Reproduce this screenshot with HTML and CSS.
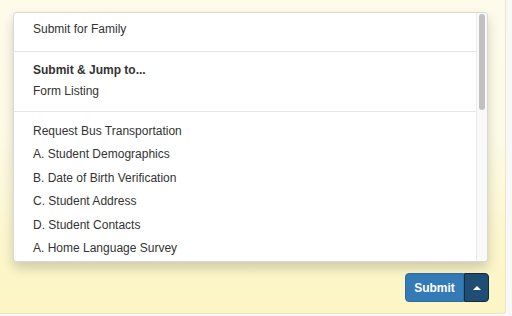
FILE: index.html
```html
<!DOCTYPE html>
<html>
<head>
<meta charset="utf-8">
<link rel="stylesheet" href="styles.css">
</head>
<body>
<div class="panel">
  <div class="panel-body"></div>
  <div class="panel-footer">
    <div class="btn-group">
      <button class="btn btn-main">Submit</button>
      <button class="btn btn-caret"><span class="caret"></span></button>
      <div class="dropdown-menu">
        <ul class="menu-list">
          <li class="item first">Submit for Family</li>
          <li class="divider"></li>
          <li class="item compact header">Submit &amp; Jump to...</li>
          <li class="item compact">Form Listing</li>
          <li class="divider"></li>
          <li class="item">Request Bus Transportation</li>
          <li class="item">A. Student Demographics</li>
          <li class="item">B. Date of Birth Verification</li>
          <li class="item">C. Student Address</li>
          <li class="item">D. Student Contacts</li>
          <li class="item">A. Home Language Survey</li>
        </ul>
        <div class="rail"><div class="thumb"></div></div>
      </div>
    </div>
  </div>
</div>
</body>
</html>
```
FILE: styles.css
```css
* { box-sizing: border-box; }
html, body {
  margin: 0;
  padding: 0;
  width: 512px;
  height: 316px;
  overflow: hidden;
  background: #f8f8f6;
  font-family: "Liberation Sans", Arial, Helvetica, sans-serif;
}
.panel {
  width: 506px;
  height: 314px;
  display: flex;
  flex-direction: column;
  background: linear-gradient(to bottom, #fefbeb 0%, #fdfae6 45%, #fcf6cb 78%, #fcf5c5 100%);
  border-right: 1px solid #ebe6c6;
  border-bottom: 1px solid #ebe6c6;
  border-radius: 0 0 4px 0;
}
.panel-body { flex: 1; }
.panel-footer {
  display: flex;
  justify-content: flex-end;
  padding: 0 16px 11px 0;
}
.btn-group {
  position: relative;
  display: flex;
}
.btn {
  height: 29px;
  margin: 0;
  border: 1px solid #2e6da4;
  color: #fff;
  font-family: "Liberation Sans", Arial, sans-serif;
  font-size: 12px;
  font-weight: bold;
  padding: 0;
}
.btn-main {
  width: 59px;
  background: #337ab7;
  border-radius: 4px 0 0 4px;
}
.btn-caret {
  width: 25px;
  background: #204d74;
  border-color: #122b40;
  border-radius: 0 4px 4px 0;
  display: flex;
  align-items: center;
  justify-content: center;
}
.caret {
  width: 0;
  height: 0;
  border-left: 4px solid transparent;
  border-right: 4px solid transparent;
  border-bottom: 4px solid #fff;
}
.dropdown-menu {
  position: absolute;
  right: 1px;
  bottom: 40px;
  width: 475px;
  height: 250px;
  display: flex;
  background: #fff;
  border: 1px solid rgba(0,0,0,.15);
  border-radius: 4px;
  box-shadow: 0 6px 12px rgba(0,0,0,.175);
  overflow: hidden;
}
.menu-list {
  flex: 1;
  list-style: none;
  margin: 0;
  padding: 5px 0 0;
  overflow: hidden;
}
.item {
  padding: 3px 19px;
  font-size: 12px;
  line-height: 17.5px;
  color: #333;
  white-space: nowrap;
}
.item.compact {
  padding: 2px 19px;
  line-height: 17px;
}
.header { font-weight: bold; }
.divider {
  height: 1px;
  margin: 9px 0 8px;
  background: #e5e5e5;
}
.divider + .item:not(.compact) { margin-top: 2px; }
.rail {
  width: 11px;
  background: #f9f9f9;
  border-left: 1px solid #ececec;
  padding: 1px 1px 0 2px;
}
.thumb {
  width: 6px;
  height: 96px;
  border-radius: 3px;
  background: #c1c1c1;
}
```
